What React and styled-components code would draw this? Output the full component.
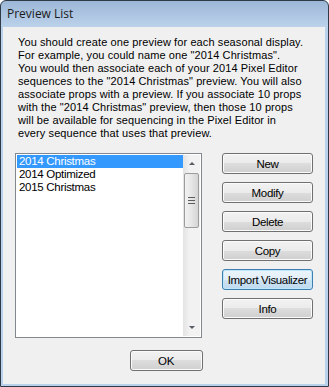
import React from 'react';
import styled, { createGlobalStyle } from 'styled-components';

const Global = createGlobalStyle`
  html, body {
    margin: 0;
    padding: 0;
    background: #ffffff;
  }
  * { box-sizing: border-box; }
`;

const Window = styled.div`
  width: 329px;
  height: 387px;
  border: 1px solid #2f3a46;
  border-radius: 6px 6px 0 0;
  background: linear-gradient(#9cb7d7 0px, #bcd2eb 26px, #b9d1ea 27px, #b9d1ea 100%);
  display: flex;
  flex-direction: column;
  overflow: hidden;
`;

const TitleBar = styled.div`
  height: 26px;
  flex: none;
  display: flex;
  align-items: center;
  padding: 0 0 1px 6px;
  font-family: "Open Sans", "Noto Sans", sans-serif;
  font-size: 12px;
  color: #1b1b1b;
`;

const Client = styled.div`
  flex: 1;
  margin: 0 3px 2px 2px;
  background: #f0f0f0;
  padding: 9px 12px 0 12px;
  font-family: "Liberation Sans", Arial, sans-serif;
  font-size: 11px;
  color: #000000;
  display: flex;
  flex-direction: column;
`;

const Intro = styled.p`
  margin: 0 0 13px 3px;
  line-height: 13px;
  letter-spacing: 0.1px;
  white-space: pre-line;
`;

const Row = styled.div`
  display: flex;
  gap: 20px;
`;

const ListBox = styled.div`
  width: 187px;
  height: 185px;
  border: 1px solid #828790;
  background: #ffffff;
  display: flex;
  padding: 1px;
`;

const Items = styled.div`
  flex: 1;
  display: flex;
  flex-direction: column;
`;

const Item = styled.div`
  height: 13px;
  line-height: 13px;
  padding-left: 2px;
  font-size: 11.5px;
  letter-spacing: -0.3px;
  background: ${p => (p.$selected ? '#3399ff' : 'transparent')};
  color: ${p => (p.$selected ? '#ffffff' : '#000000')};
`;

const ScrollBar = styled.div`
  width: 17px;
  display: flex;
  flex-direction: column;
  background: linear-gradient(90deg, #e3e3e3, #f2f2f2 40%, #f2f2f2);
`;

const Arrow = styled.div`
  height: 17px;
  display: flex;
  align-items: center;
  justify-content: center;
  &::before {
    content: "";
    border-left: 3px solid transparent;
    border-right: 3px solid transparent;
    ${p => (p.$down ? 'border-top: 3px solid #555b61;' : 'border-bottom: 3px solid #555b61;')}
  }
`;

const Thumb = styled.div`
  height: 55px;
  margin: 1px 1px 0 1px;
  border: 1px solid #9c9c9c;
  border-radius: 2px;
  background: linear-gradient(90deg, #f2f2f2, #e6e6e6 50%, #d4d4d4);
  display: flex;
  flex-direction: column;
  align-items: center;
  justify-content: center;
  gap: 2px;
`;

const Grip = styled.span`
  width: 7px;
  height: 1px;
  background: #5c5c5c;
`;

const Track = styled.div`
  flex: 1;
`;

const Buttons = styled.div`
  display: flex;
  flex-direction: column;
  gap: 8px;
`;

const Button = styled.button`
  width: ${p => p.$w || 91}px;
  height: 21px;
  padding: 0;
  font-family: "Liberation Sans", Arial, sans-serif;
  font-size: 11.5px;
  letter-spacing: -0.35px;
  color: #000000;
  border: 1px solid ${p => (p.$focus ? '#3c7fb1' : '#707070')};
  border-radius: 3px;
  box-shadow: inset 0 0 0 1px ${p => (p.$focus ? '#bfe6f8' : '#fbfbfb')};
  background: ${p =>
    p.$focus
      ? 'linear-gradient(#ebf4fb 0%, #e2eef8 50%, #cfe3f3 50%, #bdd9ef 100%)'
      : 'linear-gradient(#f2f2f2 0%, #ebebeb 50%, #dddddd 50%, #cfcfcf 100%)'};
`;

const Footer = styled.div`
  display: flex;
  justify-content: center;
  padding: 12px 0 0 4px;
`;

const previews = ['2014 Christmas', '2014 Optimized', '2015 Christmas'];
const actions = ['New', 'Modify', 'Delete', 'Copy', 'Import Visualizer', 'Info'];

const intro = `You should create one preview for each seasonal display.
For example, you could name one "2014 Christmas".
You would then associate each of your 2014 Pixel Editor
sequences to the "2014 Christmas" preview. You will also
associate props with a preview. If you associate 10 props
with the "2014 Christmas" preview, then those 10 props
will be available for sequencing in the Pixel Editor in
every sequence that uses that preview.`;

export default function App() {
  return (
    <>
      <Global />
      <Window>
        <TitleBar>Preview List</TitleBar>
        <Client>
          <Intro>{intro}</Intro>
          <Row>
            <ListBox>
              <Items>
                {previews.map((p, i) => (
                  <Item key={p} $selected={i === 0}>{p}</Item>
                ))}
              </Items>
              <ScrollBar>
                <Arrow />
                <Thumb>
                  <Grip />
                  <Grip />
                  <Grip />
                </Thumb>
                <Track />
                <Arrow $down />
              </ScrollBar>
            </ListBox>
            <Buttons>
              {actions.map(a => (
                <Button key={a} $focus={a === 'Import Visualizer'}>{a}</Button>
              ))}
            </Buttons>
          </Row>
          <Footer>
            <Button $w={73}>OK</Button>
          </Footer>
        </Client>
      </Window>
    </>
  );
}
